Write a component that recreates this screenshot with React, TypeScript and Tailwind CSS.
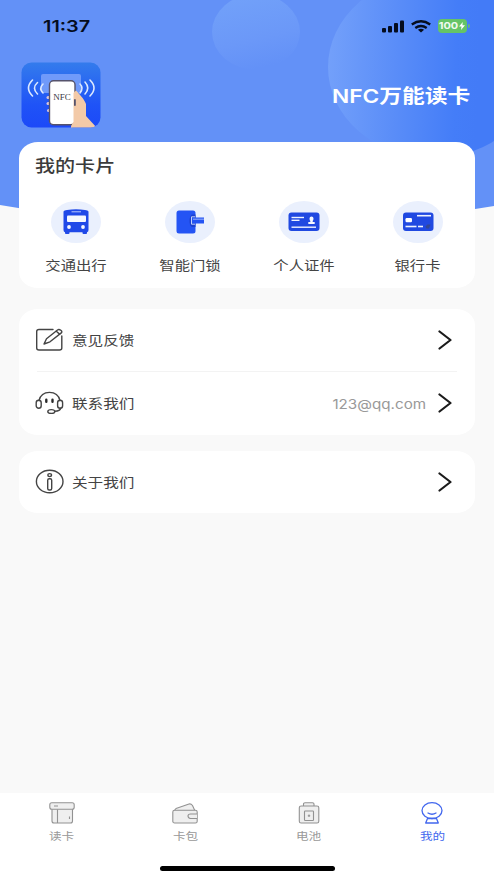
import type { ReactNode } from "react";

function HeaderBackdrop() {
  return (
    <svg className="absolute inset-x-0 top-0 h-[236px] w-full" viewBox="0 0 494 236" aria-hidden="true">
      <defs>
        <clipPath id="sheet">
          <path d="M0 0H494V206Q247 248 0 205Z" />
        </clipPath>
        <linearGradient id="bubble" x1="0.2" y1="0.1" x2="0.45" y2="1">
          <stop offset="0" stopColor="#71a0f9" />
          <stop offset="0.6" stopColor="#6b98f8" />
          <stop offset="1" stopColor="#6391f7" />
        </linearGradient>
        <linearGradient id="planet" x1="0" y1="0.4" x2="0.72" y2="0.42">
          <stop offset="0" stopColor="#73a0fa" />
          <stop offset="0.45" stopColor="#5a8df8" />
          <stop offset="0.85" stopColor="#447df8" />
          <stop offset="1" stopColor="#437bf7" />
        </linearGradient>
      </defs>
      <g clipPath="url(#sheet)">
        <rect width="494" height="236" fill="#6391f7" />
        <ellipse cx="256" cy="32" rx="44" ry="38" fill="url(#bubble)" />
        <ellipse cx="433" cy="67" rx="105" ry="91" fill="url(#planet)" />
      </g>
    </svg>
  );
}

function StatusBar() {
  return (
    <div className="flex h-[53px] items-center justify-between pb-px pl-[43px] pr-[24px]">
      <span className="origin-left scale-x-[1.24] text-[16px] font-semibold leading-none text-[#050d1f]">11:37</span>
      <div className="flex items-center gap-[7px]">
        <svg width="22" height="13" viewBox="0 0 22 13" fill="#050d1f">
          <rect x="0" y="8" width="4" height="4.5" rx="1" />
          <rect x="6" y="6" width="4" height="6.5" rx="1" />
          <rect x="12" y="3" width="4" height="9.5" rx="1" />
          <rect x="18" y="0.5" width="4" height="12" rx="1" />
        </svg>
        <svg width="20" height="13" viewBox="0 0 20 13" fill="none" stroke="#050d1f" strokeWidth="2.4">
          <path d="M0.8 4.5Q10 -1.9 19.2 4.5" />
          <path d="M4.3 7.9Q10 4 15.7 7.9" />
          <path d="M6.9 9.8Q10 7.8 13.1 9.8L10 12.5Z" fill="#050d1f" stroke="none" />
        </svg>
        <div className="flex items-center">
          <div className="flex h-[14px] w-[29px] items-center justify-center gap-[2px] rounded-[4px] bg-[#65c466]">
            <span className="scale-x-[1.15] text-[9.500px] font-bold leading-none text-[#effaf0]">100</span>
            <svg width="6" height="8" viewBox="0 0 6 8" fill="#fff">
              <path d="M3.8 0L0 4.6H2.5L2 8L6 3.3H3.4Z" />
            </svg>
          </div>
          <div className="ml-px h-[4px] w-[2px] rounded-r-full bg-[#65b67b]" />
        </div>
      </div>
    </div>
  );
}

function AppLogo() {
  return (
    <svg width="80" height="66" viewBox="0 0 80 66">
      <defs>
        <linearGradient id="logo" x1="0" y1="0" x2="0" y2="1">
          <stop offset="0" stopColor="#347cec" />
          <stop offset="0.65" stopColor="#1f53f7" />
          <stop offset="1" stopColor="#1c49f8" />
        </linearGradient>
        <clipPath id="logoClip">
          <rect x="0.5" y="0.5" width="79" height="65" rx="10" />
        </clipPath>
      </defs>
      <g clipPath="url(#logoClip)">
        <rect width="80" height="66" fill="url(#logo)" />
        <rect x="20" y="12" width="40" height="19" rx="2" fill="#709afa" />
        <g fill="none" stroke="#dbe8ff" strokeWidth="1.600" strokeLinecap="round">
          <path d="M11.500 18Q3.500 26 11.500 34" />
          <path d="M16.500 20.500Q10.500 26 16.500 32" />
          <path d="M22 22Q17.500 26.500 22 31" />
          <path d="M59 22Q63 26 59 31" />
          <path d="M64 20Q69.500 26 64 32" />
          <path d="M69 18Q77 26 69 34" />
        </g>
        <g fill="#dcc9dc">
          <rect x="25.500" y="34" width="5" height="3" rx="1.500" />
          <rect x="25.500" y="40" width="5" height="3" rx="1.500" />
          <rect x="26" y="47" width="5" height="3" rx="1.500" />
        </g>
        <path d="M53 27C58 31 63 37 65 42V54L76 66H50Z" fill="#f3caa8" />
        <rect x="28.500" y="18.700" width="25.500" height="44" rx="4" fill="#fff" stroke="#56536c" strokeWidth="1.400" />
        <path d="M52.500 31Q55 27 56 31V62L50 66Q51 61 52.500 60Z" fill="#f3caa8" />
        <rect x="53" y="37" width="1.800" height="7" rx="0.900" fill="#56536c" />
        <text x="41" y="38" textAnchor="middle" fontFamily="Liberation Serif, serif" fontSize="8.500" textLength="17.500" lengthAdjust="spacingAndGlyphs" fill="#3a3a44">NFC</text>
      </g>
    </svg>
  );
}

function BusIcon() {
  return (
    <svg width="50" height="42" viewBox="0 0 50 42">
      <path d="M12.500 10.500Q13 9.200 16 8.900Q25 7.500 34 8.900Q37 9.200 37.500 10.500V29Q37.500 31 36 31.300V32.300Q36 33 35 33H32.500Q31.500 33 31.500 32V31.300H18.500V32Q18.500 33 17.500 33H15Q14 33 14 32.300V31.300Q12.500 31 12.500 29Z" fill="#2049e8" />
      <path d="M20.500 10.800H30" stroke="#b9c9fb" strokeWidth="1" />
      <rect x="16" y="14.500" width="19" height="6.500" rx="1" fill="#f5f8ff" />
      <circle cx="18" cy="26" r="1.900" fill="#f5f8ff" />
      <circle cx="32" cy="26" r="1.900" fill="#f5f8ff" />
    </svg>
  );
}

function LockIcon() {
  return (
    <svg width="50" height="42" viewBox="0 0 50 42">
      <rect x="11.500" y="9.500" width="19" height="23" rx="2.500" fill="#2454f4" />
      <path d="M30.500 13.500H27Q24.500 15 24.500 20T27 26H30.500" fill="#1c41cf" />
      <rect x="26" y="16.500" width="13" height="6" fill="#2454f4" />
      <path d="M30 15.800H26.500V23.200H30" fill="none" stroke="#e8effd" strokeWidth="0.800" />
      <path d="M28 18.200H39" stroke="#a8bdf8" strokeWidth="0.900" />
    </svg>
  );
}

function IdIcon() {
  return (
    <svg width="50" height="42" viewBox="0 0 50 42">
      <rect x="9.500" y="11.500" width="31" height="18.500" rx="3" fill="#2049e1" />
      <g stroke="#eef3ff" strokeWidth="1.400">
        <path d="M12.500 16.500H25" />
        <path d="M12.500 19.300H20.500" />
        <path d="M12.500 26.200H37" />
      </g>
      <path d="M32.500 15.500Q34.500 15.500 34.500 17.600Q34.500 19.300 33.700 20V20.900H35.700V23H29.300V20.900H31.300V20Q30.500 19.300 30.500 17.600Q30.500 15.500 32.500 15.500Z" fill="#f5f8ff" />
    </svg>
  );
}

function BankIcon() {
  return (
    <svg width="50" height="42" viewBox="0 0 50 42">
      <rect x="10" y="11.500" width="30.500" height="18.500" rx="3" fill="#2049e1" />
      <rect x="12.500" y="17" width="6.500" height="4.300" rx="1.200" fill="#fff" />
      <g stroke="#eef3ff" strokeWidth="1.600">
        <path d="M24 14.700H38" />
        <path d="M12.500 25.500H23.500" />
        <path d="M25 25.500H30" />
      </g>
      <path d="M32.500 25.500L34.500 23.500H37.500L36 27.500H33.500Z" fill="#344894" />
    </svg>
  );
}

function EditIcon() {
  return (
    <svg width="30" height="26" viewBox="0 0 30 26" fill="none" stroke="#444" strokeWidth="1.400" strokeLinecap="round" strokeLinejoin="round">
      <path d="M18 2.500H4Q1.700 2.500 1.700 4.500V21Q1.700 23 4 23H24.500Q26.800 23 26.800 21V9" />
      <path d="M9 17L11.500 11.800L22.500 3Q24 2 25.800 3.300T26.300 5.900L15 14.800Z" />
      <path d="M21.300 4.300L24.600 7.100" />
    </svg>
  );
}

function SupportIcon() {
  return (
    <svg width="30" height="26" viewBox="0 0 30 26" fill="none" stroke="#444" strokeWidth="1.400" strokeLinecap="round">
      <path d="M4 10.500Q6 2.400 14.500 2.400T25 10.500" />
      <rect x="1.200" y="10.300" width="5" height="8" rx="2.500" />
      <rect x="22.600" y="10.300" width="5" height="8" rx="2.500" />
      <path d="M25.700 18.300Q25 21 20 21.300" />
      <ellipse cx="16.300" cy="21.500" rx="3.500" ry="1.900" />
      <path d="M11.300 9.700V11.700M17.500 9.700V11.700" stroke="#292929" strokeWidth="2.400" />
    </svg>
  );
}

function InfoIcon() {
  return (
    <svg width="30" height="26" viewBox="0 0 30 26" fill="none" stroke="#444" strokeWidth="1.400">
      <ellipse cx="14.700" cy="12.500" rx="13.300" ry="11.300" />
      <ellipse cx="14.700" cy="6.100" rx="1.900" ry="1.500" />
      <rect x="12.700" y="9.700" width="4" height="11.300" rx="1.500" />
    </svg>
  );
}

function Chevron() {
  return (
    <svg width="14" height="21" viewBox="0 0 14 21" fill="none" stroke="#1b1b1b" strokeWidth="2.200" strokeLinecap="round" strokeLinejoin="round">
      <path d="M1.500 1.500L12.500 10L1.500 18.500" />
    </svg>
  );
}

function ReaderIcon() {
  return (
    <svg width="26" height="22" viewBox="0 0 26 22" fill="#efefef" stroke="#929292" strokeWidth="1.100">
      <path d="M3 6.500V19Q3 21 5 21H21.500Q23.500 21 23.500 19V6.500Z" />
      <rect x="0.800" y="0.800" width="24.400" height="6.500" rx="2" />
      <path d="M5 4H9M8.500 7.500V21M20.500 14.500V17" fill="none" />
    </svg>
  );
}

function WalletIcon() {
  return (
    <svg width="26" height="22" viewBox="0 0 26 22" fill="#efefef" stroke="#929292" strokeWidth="1.100" strokeLinejoin="round">
      <path d="M2 9L4 6.500L17 2Q19 1.500 20.500 3.500L23 9Z" />
      <rect x="0.800" y="8.300" width="24.400" height="12.700" rx="1.800" />
      <path d="M25 12H18.500Q16 12 16 14T18.500 16.500H25" />
    </svg>
  );
}

function BatteryIcon() {
  return (
    <svg width="26" height="22" viewBox="0 0 26 22" fill="#efefef" stroke="#929292" strokeWidth="1.100">
      <path d="M7.500 4V2Q7.500 0.800 9 0.800H16.500Q18 0.800 18 2V4" />
      <rect x="3.300" y="4" width="19.500" height="17" rx="1.800" />
      <rect x="8.500" y="9" width="9" height="9.500" rx="0.700" />
      <path d="M11.800 13.800H14.200M13 12.600V15" />
    </svg>
  );
}

function MineIcon() {
  return (
    <svg width="26" height="22" viewBox="0 0 26 22" fill="none" stroke="#4267ee" strokeWidth="1.300" strokeLinejoin="round" strokeLinecap="round">
      <ellipse cx="13" cy="8.600" rx="10" ry="7.900" />
      <path d="M9 11Q13 13.500 17 11" />
      <path d="M8.500 16.500H17.500L19.300 21H6.700Z" />
    </svg>
  );
}

const cards = [
  { label: "交通出行", icon: <BusIcon /> },
  { label: "智能门锁", icon: <LockIcon /> },
  { label: "个人证件", icon: <IdIcon /> },
  { label: "银行卡", icon: <BankIcon /> },
];

const tabs = [
  { label: "读卡", icon: <ReaderIcon />, active: false },
  { label: "卡包", icon: <WalletIcon />, active: false },
  { label: "电池", icon: <BatteryIcon />, active: false },
  { label: "我的", icon: <MineIcon />, active: true },
];

function Row({ icon, label, detail }: { icon: ReactNode; label: string; detail?: string }) {
  return (
    <div className="flex h-[62px] items-center pl-[16px] pr-[23px]">
      {icon}
      <span className="ml-[7px] origin-left scale-x-[1.2] text-[13px] leading-none text-[#444]">{label}</span>
      <span className="ml-auto mr-[12px] mt-[2px] origin-right scale-x-[1.17] text-[13px] leading-none text-[#999]">{detail}</span>
      <Chevron />
    </div>
  );
}

export default function App() {
  return (
    <div className="relative flex h-[880px] w-[494px] flex-col overflow-hidden bg-[#f9f9f9] font-['Inter','Noto_Sans_CJK_SC',sans-serif]">
      <HeaderBackdrop />
      <div className="relative flex flex-1 flex-col">
        <StatusBar />
        <header className="flex h-[89px] items-start justify-between pl-[21px] pr-[24px] pt-[9px]">
          <AppLogo />
          <h1 className="mt-[24px] origin-right scale-x-[1.18] whitespace-nowrap text-[19.300px] font-bold leading-[20px] text-white">
            <span className="font-semibold">NFC</span>万能读卡
          </h1>
        </header>

        <main className="flex flex-col px-[19px]">
          <section className="h-[146px] rounded-[19px/16px] bg-white">
            <h2 className="ml-[16px] w-fit origin-left scale-x-[1.18] pt-[15px] text-[17px] font-medium leading-[18px] text-[#3b3b3b]">我的卡片</h2>
            <div className="mt-[26px] grid grid-cols-4">
              {cards.map((card) => (
                <div key={card.label} className="flex flex-col items-center">
                  <div className="h-[42px] w-[50px] rounded-[50%] bg-[#eaf0fd]">{card.icon}</div>
                  <span className="mt-[15px] scale-x-[1.18] text-[13px] leading-[14px] text-[#444]">{card.label}</span>
                </div>
              ))}
            </div>
          </section>

          <section className="mt-[21px] h-[126px] rounded-[19px/16px] bg-white">
            <Row icon={<EditIcon />} label="意见反馈" />
            <div className="mx-[18px] h-px bg-[#f3f3f3]" />
            <Row icon={<SupportIcon />} label="联系我们" detail="123@qq.com" />
          </section>

          <section className="mt-[16px] rounded-[19px/16px] bg-white">
            <Row icon={<InfoIcon />} label="关于我们" />
          </section>
        </main>

        <nav className="mt-auto h-[87px] bg-white pt-[9px]">
          <div className="grid grid-cols-4">
            {tabs.map((tab) => (
              <div key={tab.label} className={tab.active ? "flex flex-col items-center text-[#4267ee]" : "flex flex-col items-center text-[#999]"}>
                {tab.icon}
                <span className="mt-[7px] scale-x-[1.2] text-[10.500px] leading-[12px]">{tab.label}</span>
              </div>
            ))}
          </div>
          <div className="mx-auto mt-[23px] h-[5px] w-[175px] rounded-full bg-black" />
        </nav>
      </div>
    </div>
  );
}
